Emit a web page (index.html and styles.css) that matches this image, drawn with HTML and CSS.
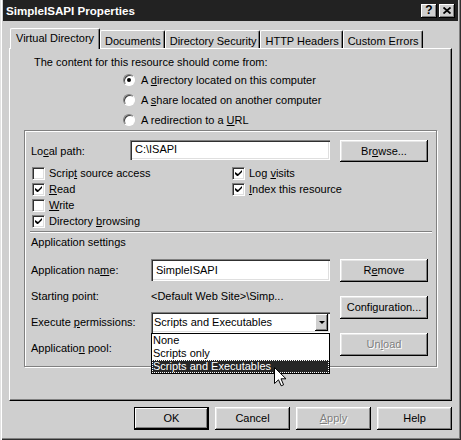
FILE: index.html
```html
<!DOCTYPE html>
<html lang="en">
<head>
    <meta charset="UTF-8">
    <title>SimpleISAPI Properties</title>
    <link rel="stylesheet" href="styles.css">
</head>
<body>

    <div class="window">
        <div class="titlebar">
            <span class="title">SimpleISAPI Properties</span>
            <div class="caption-buttons">
                <span class="caption-btn">?</span>
                <span class="caption-btn">
                    <svg width="8" height="7" viewBox="0 0 8 7"><path d="M0.5 0.5 L7.5 6.5 M7.5 0.5 L0.5 6.5" stroke="#000" stroke-width="1.8"/></svg>
                </span>
            </div>
        </div>

        <div class="dialog-body">
            <div class="tabs">
                <div class="tab active">Virtual Directory</div>
                <div class="tab">Documents</div>
                <div class="tab">Directory Security</div>
                <div class="tab">HTTP Headers</div>
                <div class="tab">Custom Errors</div>
            </div>

            <div class="panel">
                <div class="intro">The content for this resource should come from:</div>

                <div class="radios">
                    <div class="radio-row"><span class="radio checked"></span><span>A <u>d</u>irectory located on this computer</span></div>
                    <div class="radio-row"><span class="radio"></span><span>A <u>s</u>hare located on another computer</span></div>
                    <div class="radio-row"><span class="radio"></span><span>A redirection to a <u>U</u>RL</span></div>
                </div>

                <div class="group">
                    <div class="path-row">
                        <span class="path-label">Lo<u>c</u>al path:</span>
                        <div class="textbox path-box">C:\ISAPI</div>
                        <button class="btn side-btn">Br<u>o</u>wse...</button>
                    </div>

                    <div class="checks">
                        <div class="check-row"><span class="check"></span><span>Scrip<u>t</u> source access</span></div>
                        <div class="check-row"><span class="check checked"><svg width="7" height="7" viewBox="0 0 7 7"><path d="M0 2v2l2 2h1l4-4v-2l-4 4z"/></svg></span><span>Log <u>v</u>isits</span></div>
                        <div class="check-row"><span class="check checked"><svg width="7" height="7" viewBox="0 0 7 7"><path d="M0 2v2l2 2h1l4-4v-2l-4 4z"/></svg></span><span><u>R</u>ead</span></div>
                        <div class="check-row"><span class="check checked"><svg width="7" height="7" viewBox="0 0 7 7"><path d="M0 2v2l2 2h1l4-4v-2l-4 4z"/></svg></span><span><u>I</u>ndex this resource</span></div>
                        <div class="check-row"><span class="check"></span><span><u>W</u>rite</span></div>
                        <div></div>
                        <div class="check-row"><span class="check checked"><svg width="7" height="7" viewBox="0 0 7 7"><path d="M0 2v2l2 2h1l4-4v-2l-4 4z"/></svg></span><span>Directory <u>b</u>rowsing</span></div>
                    </div>

                    <div class="separator"></div>
                    <div class="section-title">Application settings</div>

                    <div class="app-settings">
                        <div class="app-fields">
                            <span>Application na<u>m</u>e:</span>
                            <div class="textbox">SimpleISAPI</div>

                            <span>Starting point:</span>
                            <span>&lt;Default Web Site&gt;\Simp...</span>

                            <span>Execute <u>p</u>ermissions:</span>
                            <div class="combo">
                                <span class="combo-text">Scripts and Executables</span>
                                <span class="combo-arrow"></span>
                                <ul class="dropdown">
                                    <li>None</li>
                                    <li>Scripts only</li>
                                    <li class="selected">Scripts and Executables</li>
                                </ul>
                                <svg class="cursor" width="13" height="20" viewBox="0 0 13 20"><path d="M0.5 0.5 V16.5 L4.5 12.8 L7.2 18.8 L9.6 17.8 L7 11.8 H12 Z" fill="#fff" stroke="#000" stroke-width="1"/></svg>
                            </div>

                            <span>Applicatio<u>n</u> pool:</span>
                            <span></span>
                        </div>

                        <div class="app-buttons">
                            <button class="btn side-btn">R<u>e</u>move</button>
                            <button class="btn side-btn">Configuration...</button>
                            <button class="btn side-btn disabled">Un<u>l</u>oad</button>
                        </div>
                    </div>
                </div>
            </div>

            <div class="footer">
                <button class="btn footer-btn default">OK</button>
                <button class="btn footer-btn">Cancel</button>
                <button class="btn footer-btn disabled"><u>A</u>pply</button>
                <button class="btn footer-btn">Help</button>
            </div>
        </div>
    </div>

</body>
</html>
```

FILE: styles.css
```css
* {
    box-sizing: border-box;
}

body {
    margin: 0;
    font-family: "Liberation Sans", Arial, sans-serif;
    font-size: 11px;
    line-height: 13px;
    color: #000;
    background: #cfcfcf;
}

u {
    text-decoration-thickness: 1px;
    text-underline-offset: 1px;
}

.window {
    width: 461px;
    height: 440px;
    padding: 0 3px;
    background: #cfcfcf;
    box-shadow: inset 1px 0 #e2e2e2, inset 2px 0 #fff, inset -1px -1px #303030, inset -2px -2px #808080;
}

/* barre de titre */
.titlebar {
    height: 21px;
    display: flex;
    align-items: center;
    justify-content: space-between;
    padding: 0 3px 0 3px;
    background: #222;
    color: #fff;
    font-weight: bold;
    font-size: 11.6px;
}

.caption-buttons {
    display: flex;
    gap: 2px;
}

.caption-btn {
    width: 16px;
    height: 14px;
    display: flex;
    align-items: center;
    justify-content: center;
    background: #cfcfcf;
    color: #000;
    font-size: 12px;
    box-shadow: inset -1px -1px #000, inset 1px 1px #fff, inset -2px -2px #808080;
}

.dialog-body {
    padding: 7px 6px 0 6px;
}

/* onglets */
.tabs {
    height: 20px;
    display: flex;
    align-items: flex-end;
    padding-left: 1px;
    position: relative;
    z-index: 1;
}

.tab {
    height: 18px;
    padding: 4px 3px 0 4px;
    background: #cfcfcf;
    border-top: 1px solid #fff;
    border-left: 1px solid #fff;
    border-right: 1px solid #000;
    border-radius: 2px 2px 0 0;
    box-shadow: inset -1px 0 #808080;
    white-space: nowrap;
}

.tab.active {
    height: 21px;
    margin-bottom: -1px;
    padding-top: 3px;
    padding-left: 5px;
    padding-right: 5px;
}

.panel {
    height: 353px;
    border: 1px solid;
    border-color: #fff #000 #000 #fff;
    box-shadow: inset -1px -1px #808080;
}

.intro {
    padding: 7px 0 0 24px;
}

.radios {
    margin-top: 1px;
    margin-left: 113px;
}

.radio-row {
    height: 20px;
    display: flex;
    align-items: center;
    gap: 6px;
}

.radio {
    width: 12px;
    height: 12px;
    border-radius: 50%;
    border: 1px solid;
    border-color: #808080 #fff #fff #808080;
    background: #fff;
    box-shadow: inset 1px 1px #404040;
    display: flex;
    align-items: center;
    justify-content: center;
}

.radio.checked::after {
    content: "";
    width: 4px;
    height: 4px;
    border-radius: 50%;
    background: #000;
}

/* cadre */
.group {
    margin: 0 14px 0 14px;
    padding: 9px 8px 7px 6px;
    border: 1px solid #808080;
    box-shadow: 1px 1px 0 #fff, inset 1px 1px 0 #fff;
}

.path-row {
    display: flex;
    align-items: flex-start;
}

.path-label {
    width: 99px;
    line-height: 22px;
}

.textbox {
    height: 21px;
    padding: 4px 5px;
    background: #fff;
    box-shadow: inset 1px 1px #808080, inset 2px 2px #303030, inset -1px -1px #fff, inset -2px -2px #dfdfdf;
    white-space: nowrap;
}

.path-box {
    width: 200px;
    height: 20px;
    padding-top: 3px;
}

.btn {
    font: inherit;
    color: #000;
    background: #cfcfcf;
    border: none;
    padding: 0;
    box-shadow: inset -1px -1px #000, inset 1px 1px #fff, inset -2px -2px #808080, inset 2px 2px #e6e6e6;
}

.side-btn {
    width: 88px;
    height: 23px;
}

.path-row .side-btn {
    margin-left: 10px;
    height: 22px;
}

.btn.disabled {
    color: #808080;
    text-shadow: 1px 1px #fff;
}

.checks {
    margin-top: 3px;
    display: grid;
    grid-template-columns: 200px auto;
    grid-auto-rows: 16px;
}

.check-row {
    display: flex;
    align-items: center;
    gap: 4px;
    padding-left: 1px;
}

.check {
    width: 13px;
    height: 13px;
    background: #fff;
    border: 1px solid;
    border-color: #808080 #fff #fff #808080;
    box-shadow: inset 1px 1px #303030, inset -1px -1px #dfdfdf;
    display: flex;
    align-items: center;
    justify-content: center;
}

.separator {
    margin: 2px -4px 0 -1px;
    height: 2px;
    border-top: 1px solid #808080;
    border-bottom: 1px solid #fff;
}

.section-title {
    padding-top: 3px;
}

.app-settings {
    margin-top: 10px;
    display: flex;
    align-items: flex-start;
}

.app-fields {
    display: grid;
    grid-template-columns: 120px 179px;
    grid-auto-rows: 22px;
    row-gap: 4px;
    align-items: center;
}

.app-fields .textbox {
    height: 22px;
    padding-top: 5px;
}

.app-buttons {
    margin-left: 10px;
    display: flex;
    flex-direction: column;
    gap: 14px;
}

/* liste déroulante */
.combo {
    position: relative;
    height: 21px;
    display: flex;
    align-items: center;
    justify-content: space-between;
    padding: 2px;
    background: #fff;
    box-shadow: inset 1px 1px #808080, inset 2px 2px #303030, inset -1px -1px #fff, inset -2px -2px #dfdfdf;
}

.combo-text {
    padding-left: 1px;
}

.combo-arrow {
    width: 13px;
    height: 17px;
    background: #cfcfcf;
    box-shadow: inset -1px -1px #000, inset 1px 1px #fff, inset -2px -2px #808080;
    display: flex;
    align-items: center;
    justify-content: center;
}

.combo-arrow::after {
    content: "";
    border-left: 3px solid transparent;
    border-right: 3px solid transparent;
    border-top: 3px solid #000;
    margin-top: 1px;
}

.dropdown {
    position: absolute;
    top: 21px;
    left: 0;
    width: 179px;
    height: 41px;
    margin: 0;
    padding: 0;
    list-style: none;
    background: #fff;
    border: 1px solid #000;
    z-index: 5;
}

.dropdown li {
    height: 13px;
    padding-left: 1px;
    line-height: 13px;
}

.dropdown li.selected {
    background: #262626;
    color: #fff;
    outline: 1px dotted #fff;
    outline-offset: -1px;
}

.cursor {
    position: absolute;
    left: 123px;
    top: 55px;
    z-index: 6;
}

.footer {
    margin-top: 6px;
    display: flex;
    justify-content: flex-end;
    gap: 6px;
}

.footer-btn {
    width: 75px;
    height: 23px;
}

.footer-btn.default {
    box-shadow: inset 0 0 0 1px #000, inset -2px -2px #000, inset 2px 2px #fff, inset -3px -3px #808080;
}
```
